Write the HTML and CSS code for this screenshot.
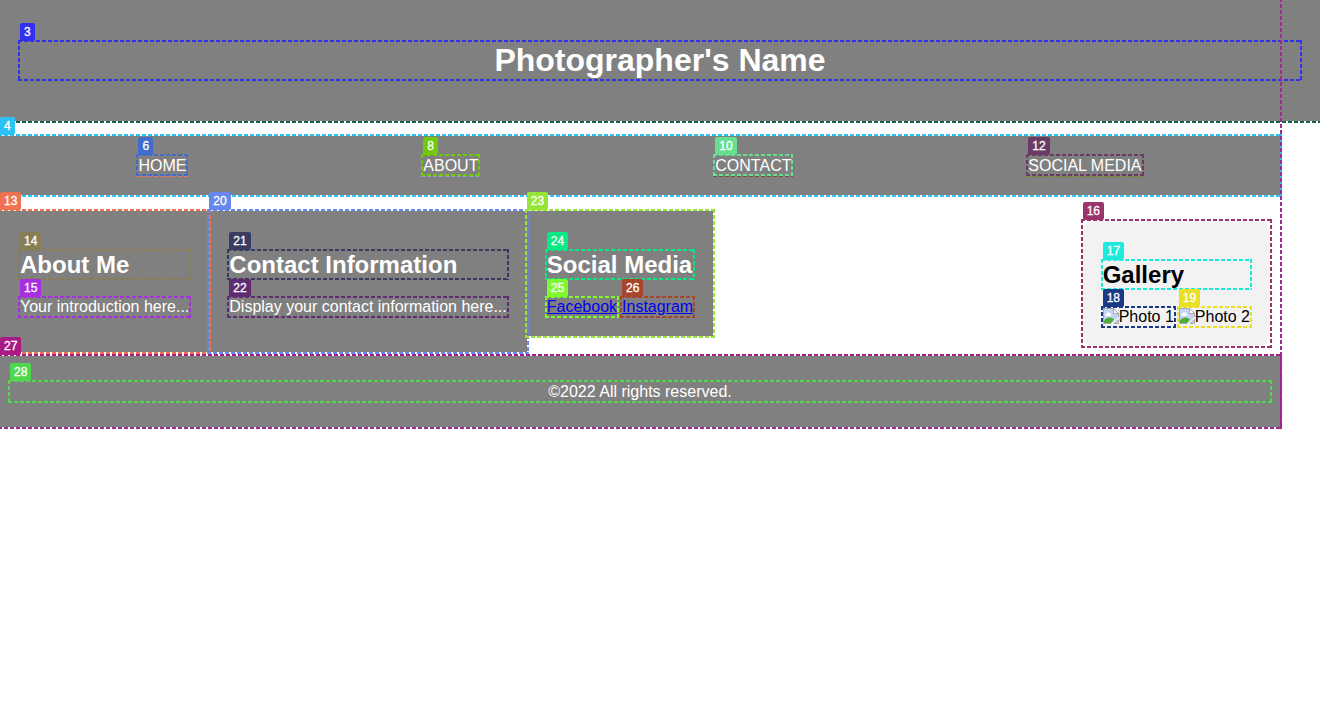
FILE: index.html
```html
<!DOCTYPE html>
<html lang="en">
<head>
<meta charset="utf-8">
<title>Photographer's Name</title>
<link rel="stylesheet" href="styles.css">
</head>
<body>
<div class="page mark ink-page">
  <header class="header mark ink-header">
    <h1 class="title mark ink-title"><span class="tag">3</span>Photographer's Name</h1>
  </header>
  <nav class="nav mark ink-nav">
    <span class="tag">4</span>
    <ul class="menu">
      <li class="menu-item mark ink-item-home"><a class="menu-link mark ink-home" href="#home"><span class="tag">6</span>HOME</a></li>
      <li class="menu-item mark ink-item-about"><a class="menu-link mark ink-about" href="#about"><span class="tag">8</span>ABOUT</a></li>
      <li class="menu-item mark ink-item-contact"><a class="menu-link mark ink-contact" href="#contact"><span class="tag">10</span>CONTACT</a></li>
      <li class="menu-item mark ink-item-social"><a class="menu-link mark ink-social" href="#social"><span class="tag">12</span>SOCIAL MEDIA</a></li>
    </ul>
  </nav>
  <main class="main">
    <section class="panel tall mark ink-13" id="about">
      <span class="tag">13</span>
      <h2 class="heading mark ink-14"><span class="tag">14</span>About Me</h2>
      <p class="text mark ink-15"><span class="tag">15</span>Your introduction here...</p>
    </section>
    <section class="panel tall mark ink-20" id="contact">
      <span class="tag">20</span>
      <h2 class="heading mark ink-21"><span class="tag">21</span>Contact Information</h2>
      <p class="text mark ink-22"><span class="tag">22</span>Display your contact information here...</p>
    </section>
    <section class="panel mark ink-23" id="social">
      <span class="tag">23</span>
      <h2 class="heading mark ink-24"><span class="tag">24</span>Social Media</h2>
      <div class="row">
        <a class="social-link mark ink-25" href="#facebook"><span class="tag">25</span><span class="underlined">Facebook</span></a>
        <a class="social-link mark ink-26" href="#instagram"><span class="tag">26</span><span class="underlined">Instagram</span></a>
      </div>
    </section>
    <aside class="panel gallery mark ink-16">
      <span class="tag">16</span>
      <h2 class="heading mark ink-17"><span class="tag">17</span>Gallery</h2>
      <div class="row">
        <div class="photo mark ink-18"><span class="tag">18</span>
          <svg class="photo-icon" viewBox="0 0 16 16" aria-hidden="true"><path d="M.5.5h10l5 5V9l-7 6.500h-8z" fill="#c3d5f3"/><path d="M1 15v-2.500C3.500 9 8 8.500 11 11.500L8 15z" fill="#4fae36"/><path d="M3 8a1.500 1.500 0 0 1 .5-2.800 2 2 0 0 1 3.600.3A1.300 1.300 0 0 1 7.500 8z" fill="#fff"/><path d="M15.500 5.500V9M8 15.500H.5V.5h10" fill="none" stroke="#aaa"/><path d="M10.500.5v5h5z" fill="#fff" stroke="#aaa"/><path d="M15.500 11.500v4H11z" fill="#c3d5f3" stroke="#aaa"/></svg><span>Photo 1</span></div>
        <div class="photo mark ink-19"><span class="tag">19</span>
          <svg class="photo-icon" viewBox="0 0 16 16" aria-hidden="true"><path d="M.5.5h10l5 5V9l-7 6.500h-8z" fill="#c3d5f3"/><path d="M1 15v-2.500C3.500 9 8 8.500 11 11.500L8 15z" fill="#4fae36"/><path d="M3 8a1.500 1.500 0 0 1 .5-2.800 2 2 0 0 1 3.600.3A1.300 1.300 0 0 1 7.500 8z" fill="#fff"/><path d="M15.500 5.500V9M8 15.500H.5V.5h10" fill="none" stroke="#aaa"/><path d="M10.500.5v5h5z" fill="#fff" stroke="#aaa"/><path d="M15.500 11.500v4H11z" fill="#c3d5f3" stroke="#aaa"/></svg><span>Photo 2</span></div>
      </div>
    </aside>
  </main>
  <footer class="footer mark ink-27">
    <span class="tag">27</span>
    <p class="copyright mark ink-28"><span class="tag">28</span>©2022 All rights reserved.</p>
  </footer>
</div>
</body>
</html>
```
FILE: styles.css
```css
* {
  box-sizing: border-box;
}

body {
  min-height: 100vh;
  margin: 0;
  background: #fff;
  color: #000;
  font: 16px/18px "Liberation Sans", Arial, sans-serif;
  overflow-x: clip;
}

h1, h2, p, ul {
  margin: 0;
  padding: 0;
}

/* Dashed frame drawn just outside a box, with a numbered tag above it */
.mark {
  position: relative;
}

.mark::after {
  content: "";
  position: absolute;
  inset: -2px;
  pointer-events: none;
  background:
    repeating-linear-gradient(90deg, var(--ink) 0 4px, transparent 4px 6px) top / 100% 2px no-repeat,
    repeating-linear-gradient(90deg, var(--ink) 0 4px, transparent 4px 6px) bottom / 100% 2px no-repeat,
    repeating-linear-gradient(180deg, var(--ink) 0 4px, transparent 4px 6px) left / 2px 100% no-repeat,
    repeating-linear-gradient(180deg, var(--ink) 0 4px, transparent 4px 6px) right / 2px 100% no-repeat;
}

.tag {
  position: absolute;
  z-index: 2;
  left: 0;
  bottom: calc(100% + 1px);
  padding: 0 4px;
  border-radius: 2px;
  background: var(--ink);
  color: #fff;
  font-size: 12px;
  font-weight: 400;
  line-height: 18px;
  -webkit-text-stroke: 0.3px #fff;
}

/* Page */
.page {
  margin-right: 40px;
}

.header {
  margin-right: -40px;
  padding: 42px 20px;
  background: #808080;
  color: #fff;
}

.title {
  font-size: 32px;
  line-height: 37px;
  text-align: center;
}

.nav {
  margin-top: 15px;
  background: #808080;
}

.menu {
  display: flex;
  justify-content: space-around;
  padding: 20px;
  list-style: none;
}

.menu-item {
  padding-bottom: 1px;
}

.menu-link {
  display: block;
  z-index: 1;
  padding-top: 2px;
  color: #fff;
  line-height: 16px;
  text-decoration: none;
}

.main {
  display: flex;
  align-items: flex-start;
  margin-top: 16px;
}

.panel {
  padding: 40px 20px 20px;
  background: #808080;
  color: #fff;
}

.panel::after {
  z-index: 1;
}

.tall {
  padding-bottom: 36px;
}

.heading {
  margin-bottom: 20px;
  font-size: 24px;
  line-height: 27px;
}

.row {
  display: flex;
  gap: 5px;
}

.social-link {
  color: #0000ee;
  text-decoration: none;
}

.underlined {
  text-decoration: underline;
}

.gallery {
  margin: 10px 10px 10px auto;
  border-radius: 10px;
  background: #f2f2f2;
  color: #000;
}

.photo {
  display: flex;
}

.photo-icon {
  width: 16px;
  height: 16px;
}

.footer {
  padding: 26px 10px;
  background: #808080;
  color: #fff;
  text-align: center;
}

.copyright {
  padding-top: 1px;
}

/* Frame colours */
.ink-page { --ink: #9b2d8e; }
.ink-header { --ink: #17654e; }
.ink-title { --ink: #3230f0; }
.ink-nav { --ink: #2cc2f5; }
.ink-item-home { --ink: #e8735a; }
.ink-home { --ink: #406ccc; }
.ink-item-about { --ink: #8fa0c8; }
.ink-about { --ink: #70c908; }
.ink-item-contact { --ink: #7d4a3c; }
.ink-contact { --ink: #68df8e; }
.ink-item-social { --ink: #7c8720; }
.ink-social { --ink: #693a63; }
.ink-13 { --ink: #ef7250; }
.ink-14 { --ink: #887e55; }
.ink-15 { --ink: #a82de3; }
.ink-16 { --ink: #9b336c; }
.ink-17 { --ink: #1deadb; }
.ink-18 { --ink: #1b3a86; }
.ink-19 { --ink: #e9df24; }
.ink-20 { --ink: #6887ec; }
.ink-21 { --ink: #393b61; }
.ink-22 { --ink: #602d73; }
.ink-23 { --ink: #94e534; }
.ink-24 { --ink: #05ea85; }
.ink-25 { --ink: #7cfa2d; }
.ink-26 { --ink: #a7452d; }
.ink-27 { --ink: #a91b83; }
.ink-28 { --ink: #4fd74d; }
```
